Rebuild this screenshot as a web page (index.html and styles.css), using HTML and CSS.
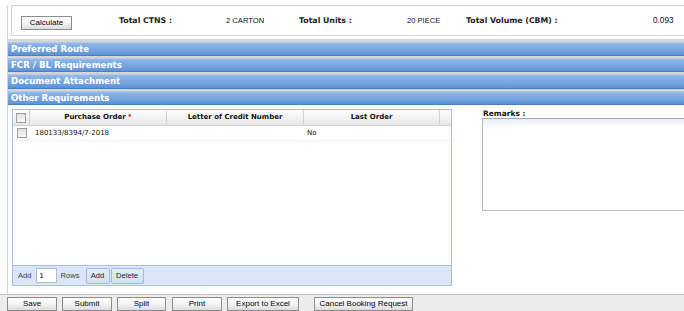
FILE: index.html
```html
<!DOCTYPE html>
<html>
<head>
<meta charset="utf-8">
<link rel="stylesheet" href="styles.css">
</head>
<body>
<div class="main">
  <div class="totals">
    <div class="cell"><button class="btn calc">Calculate</button></div>
    <div class="lbl">Total CTNS :</div>
    <div class="val">2 CARTON</div>
    <div class="lbl">Total Units :</div>
    <div class="val">20 PIECE</div>
    <div class="lbl">Total Volume (CBM) :</div>
    <div class="val num">0.093</div>
  </div>
  <div class="sections">
    <div class="bar">Preferred Route</div>
    <div class="bar">FCR / BL Requirements</div>
    <div class="bar tall">Document Attachment</div>
    <div class="bar">Other Requirements</div>
  </div>
  <div class="content">
    <div class="grid">
      <div class="ghead">
        <div class="c0"><span class="cb"></span></div>
        <div class="c1">Purchase Order <span class="req">*</span></div>
        <div class="c2">Letter of Credit Number</div>
        <div class="c3">Last Order</div>
        <div class="c4"></div>
      </div>
      <div class="grow">
        <div class="c0"><span class="cb"></span></div>
        <div class="c1 left">180133/8394/7-2018</div>
        <div class="c2"></div>
        <div class="c3 left">No</div>
        <div class="c4"></div>
      </div>
      <div class="gbody"></div>
      <div class="gfoot">
        <span class="ftxt">Add</span>
        <span class="finput">1</span>
        <span class="ftxt rows">Rows</span>
        <button class="fbtn add">Add</button>
        <button class="fbtn del">Delete</button>
      </div>
    </div>
    <div class="remarks">
      <div class="rlabel">Remarks :</div>
      <div class="ta"></div>
    </div>
  </div>
</div>
<div class="actions">
  <button class="btn w50">Save</button>
  <button class="btn w50">Submit</button>
  <button class="btn w49">Split</button>
  <button class="btn w50 m6">Print</button>
  <button class="btn w72">Export to Excel</button>
  <button class="btn w99 m15">Cancel Booking Request</button>
</div>
</body>
</html>
```
FILE: styles.css
```css
html, body {
  margin: 0;
  padding: 0;
  background: #ffffff;
  overflow: hidden;
  width: 684px;
  height: 311px;
}
body {
  font-family: "Liberation Sans", Arial, sans-serif;
  color: #000;
}
.main {
  margin-left: 7px;
  border-left: 1px solid #d4d4d4;
  height: 289px;
  width: 677px;
  box-sizing: border-box;
}
.totals {
  margin: 5px 0 0 3px;
  height: 31px;
  box-sizing: border-box;
  border: 1px solid #d2d2d2;
  border-right: none;
  display: grid;
  grid-template-columns: 98px 107px 73px 108px 59px 187px 1fr;
  align-items: center;
  padding-left: 9px;
  background: #fff;
}
.btn {
  box-sizing: border-box;
  height: 14px;
  border: 1px solid #8c8c8c;
  background: linear-gradient(#ffffff, #f4f4f4 50%, #dcdcdc);
  font-family: "Liberation Sans", Arial, sans-serif;
  font-size: 8px;
  color: #000;
  padding: 0;
  margin: 0;
  line-height: 12px;
}
.calc {
  width: 51px;
  margin-top: 1px;
}
.lbl {
  font-family: "DejaVu Sans", Verdana, sans-serif;
  font-weight: bold;
  font-size: 7.8px;
  color: #222;
}
.val {
  font-size: 7.6px;
  color: #111;
}
.num {
  font-size: 8.2px;
}
.sections {
  margin-top: 3px;
  padding-top: 3px;
  background: #d6d6d6;
  display: flex;
  flex-direction: column;
  gap: 2px;
}
.bar {
  height: 14px;
  box-sizing: border-box;
  background: linear-gradient(#b4d0f0 0, #8ab4e6 15%, #74a4e0 60%, #5f93d6 90%, #3f74bd 100%);
  color: #fff;
  font-family: "DejaVu Sans", Verdana, sans-serif;
  font-weight: bold;
  font-size: 8.6px;
  line-height: 14px;
  padding-left: 3px;
  white-space: nowrap;
}
.bar.tall {
  height: 15px;
  line-height: 15px;
}
.content {
  display: flex;
  margin-top: 4px;
  height: 177px;
}
.grid {
  margin-left: 4px;
  width: 440px;
  box-sizing: border-box;
  border: 1px solid #a3c2ea;
  display: flex;
  flex-direction: column;
}
.ghead, .grow {
  display: flex;
  font-family: "DejaVu Sans", Verdana, sans-serif;
  font-size: 7px;
}
.ghead {
  height: 15px;
  border-bottom: 1px solid #d2d2d2;
  background: linear-gradient(#ffffff, #f3f3f3 50%, #e6e6e6);
  font-weight: bold;
  line-height: 15px;
  color: #111;
}
.ghead > div {
  border-right: 1px solid #d2d2d2;
  box-sizing: border-box;
  text-align: center;
}
.grow {
  height: 14px;
  border-bottom: 1px solid #ececec;
  line-height: 14px;
  color: #111;
}
.c0 { width: 17px; display: flex; align-items: center; justify-content: center; }
.c1 { width: 137px; }
.c2 { width: 137px; }
.c3 { width: 136px; }
.c4 { width: 11px; }
.ghead > .c4 { border-right: none; }
.grow .left { padding-left: 5px; box-sizing: border-box; }
.grow .c3.left { padding-left: 3px; }
.req { color: #e02020; }
.cb {
  display: block;
  width: 10px;
  height: 10px;
  box-sizing: border-box;
  border: 1px solid #a0a0a0;
  background: linear-gradient(#e0e0e0, #f8f8f8);
}
.gbody {
  flex: 1;
  background: #fff;
}
.gfoot {
  height: 19px;
  border-top: 1px solid #a3c2ea;
  background: #dae6f5;
  display: flex;
  align-items: center;
  padding-left: 5px;
  font-size: 7.6px;
  color: #444;
}
.finput {
  margin-left: 4px;
  width: 21px;
  height: 15px;
  box-sizing: border-box;
  border: 1px solid #b5b8c8;
  background: #fff;
  color: #000;
  padding-left: 3px;
  line-height: 13px;
}
.rows { margin-left: 4px; }
.fbtn {
  box-sizing: border-box;
  height: 16px;
  border: 1px solid #9cbbe3;
  border-radius: 2px;
  background: linear-gradient(#e4eefa, #cfdff4);
  font-family: "Liberation Sans", Arial, sans-serif;
  font-size: 7.6px;
  color: #222;
  padding: 0;
  margin: 0;
}
.add { width: 24px; margin-left: 6px; }
.del { width: 33px; margin-left: 1px; }
.remarks {
  margin-left: 30px;
  flex: 1;
  display: flex;
  flex-direction: column;
}
.rlabel {
  height: 9px;
  font-family: "DejaVu Sans", Verdana, sans-serif;
  font-weight: bold;
  font-size: 7.5px;
  line-height: 9px;
  color: #111;
  padding-left: 1px;
}
.ta {
  height: 93px;
  box-sizing: border-box;
  border: 1px solid #bdbdbd;
  border-top-color: #a8a8a8;
  border-right: none;
  background: linear-gradient(#e6edf6 0, #ffffff 9px);
}
.actions {
  border-top: 1px solid #c6c6c6;
  background: #ececec;
  height: 22px;
  box-sizing: border-box;
  padding: 2px 0 0 7px;
  display: flex;
  align-items: flex-start;
  gap: 5px;
}
.w50 { width: 50px; }
.w49 { width: 49px; }
.w72 { width: 72px; }
.w99 { width: 99px; }
.m6 { margin-left: 1px; }
.m15 { margin-left: 10px; }
```
